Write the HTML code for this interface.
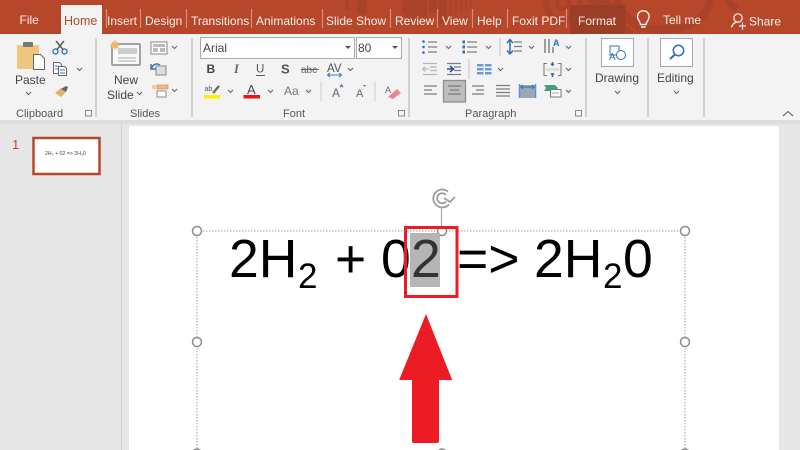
<!DOCTYPE html>
<html lang="en"><head><meta charset="utf-8"><title>PowerPoint</title>
<style>html,body{margin:0;padding:0;background:#e6e6e6;overflow:hidden}svg{display:block;filter:blur(.35px)}text{font-family:"Liberation Sans",Arial,sans-serif}.t{font-size:12px;fill:#fbefea}.r{font-size:12px;fill:#444}.g{font-size:11px;fill:#555}.dd{fill:none;stroke:#666;stroke-width:1.100}.ln{stroke:#7d7d7d;stroke-width:1.300;fill:none}</style></head><body>
<svg width="800" height="450" viewBox="0 0 800 450" xmlns="http://www.w3.org/2000/svg">
<rect width="800" height="450" fill="#e6e6e6"/>
<!-- title bar -->
<rect width="800" height="34" fill="#b7472a"/>
<g fill="#a8432a"><rect x="345" y="0" width="4" height="10"/><rect x="357" y="0" width="10" height="14"/><path d="M402 0h25v20l-10 3-15-10z"/><rect x="429" y="0" width="8" height="13"/><rect x="438" y="0" width="9" height="24"/><path d="M450 0h2v15h-2zM455 0h2v15h-2zM460 0h2v12h-2zM465 0h2v10h-2zM470 0h2v7h-2z"/></g>
<g fill="none" stroke="#a8432a"><circle cx="563" cy="3" r="17" stroke-width="6"/><circle cx="563" cy="3" r="6" stroke-width="4"/><path d="M588 -2L632 34M600 -2L642 30" stroke-width="7"/><path d="M618 -2a46 32 0 0 0 92 0" stroke-width="8"/><path d="M726 0L737 9" stroke-width="7"/></g>
<rect x="570" y="5" width="55" height="29" fill="#9a3e25"/>
<path d="M61 34V5h41v29z" fill="#f3f3f3"/>
<g stroke="#d98d76" stroke-width="1.200"><path d="M106.500 9V28M140.500 9V28M186.500 9V28M251.500 9V28M322.500 9V28M390.500 9V28M437.500 9V28M472.500 9V28M507.500 9V28M566.500 9V28"/></g>
<text x="19.500" y="24" class="t">File</text><text x="64" y="25" font-size="12.500" fill="#b7472a">Home</text>
<text x="107" y="25" class="t">Insert</text><text x="145" y="25" class="t">Design</text><text x="191" y="25" class="t">Transitions</text><text x="256" y="25" class="t">Animations</text><text x="326" y="25" class="t">Slide Show</text><text x="395" y="25" class="t">Review</text><text x="442" y="25" class="t">View</text><text x="477" y="25" class="t">Help</text><text x="512" y="25" class="t">Foxit PDF</text><text x="578" y="25" class="t">Format</text><text x="663" y="24" class="t">Tell me</text><text x="749" y="25.500" class="t">Share</text>
<!-- bulb -->
<path d="M640.500 24.500c0-3-3-4-3-8a5.800 5.800 0 0 1 11.600 0c0 4-3 5-3 8z" fill="none" stroke="#fbefea" stroke-width="1.400"/><path d="M641 27h4.500" stroke="#fbefea" stroke-width="1.500"/>
<!-- person -->
<circle cx="738" cy="18" r="4.200" fill="none" stroke="#fbefea" stroke-width="1.200"/><path d="M731.500 27.500c1-4 3.500-5.500 6.500-5.500M739 26h7M742.500 22.500v7" fill="none" stroke="#fbefea" stroke-width="1.200"/>
<!-- ribbon -->
<rect y="34" width="800" height="86" fill="#f3f3f3"/>
<rect y="120" width="800" height="4" fill="#dcdcdc"/>
<g stroke="#c4c4c4" stroke-width="1.500"><path d="M96 38V117M192 38V117M409 38V117M586 38V117M648 38V117M704 38V117"/></g>
<!-- Clipboard -->
<rect x="17" y="45" width="22" height="24" rx="1" fill="#eec67e"/><rect x="23" y="42" width="10" height="5" rx="1" fill="#777"/>
<path d="M33.500 54.500h7l4 4v11h-11z" fill="#fff" stroke="#666"/>
<text x="15" y="84" class="r">Paste</text><path d="M26 92l2.500 2.500L31 92" class="dd"/>
<g fill="none" stroke="#3d78b8" stroke-width="1.500"><circle cx="55.500" cy="51.500" r="2.500"/><circle cx="64.500" cy="51.500" r="2.500"/></g><path d="M56 41l7 8.500M64 41l-7 8.500" stroke="#555" stroke-width="1.400"/>
<path d="M53.500 62.500h6l2 2v9h-8z" fill="#fff" stroke="#667"/><path d="M55 66h4M55 69h4" stroke="#3d78b8"/><path d="M58.500 66.500h6l2 2v7h-8z" fill="#fff" stroke="#667"/><path d="M60 70h5M60 73h5" stroke="#3d78b8"/><path d="M77 68l2.500 2.500L82 68" class="dd"/>
<path d="M55 93l6-5 5 4-5 5z" fill="#e3b26a"/><path d="M61 89l5-3 2 1-2 5z" fill="#666"/>
<text x="16" y="117" class="g">Clipboard</text><path d="M85.500 110.500h6v5.500h-6z" fill="none" stroke="#888"/>
<!-- Slides -->
<rect x="112" y="44" width="28" height="21" rx="1" fill="#f8f8f8" stroke="#888" stroke-width="1.500"/><rect x="118" y="48" width="19" height="6" fill="#ccc"/><path d="M118 58h18M118 61h18" stroke="#aaa"/><circle cx="115" cy="45" r="3.500" fill="#f2c27a"/><path d="M110 45h10M115 40v10M112 42l6 6M118 42l-6 6" stroke="#eeb45f"/>
<text x="114" y="84" class="r">New</text><text x="107" y="99" class="r">Slide</text><path d="M137 92l2.500 2.500L142 92" class="dd"/>
<rect x="151" y="42" width="16" height="12" fill="#fff" stroke="#888"/><rect x="153" y="44" width="12" height="3" fill="#bbb"/><rect x="153" y="48" width="5" height="4" fill="#bbb"/><rect x="160" y="48" width="5" height="4" fill="#bbb"/><path d="M172 46l2.500 2.500L177 46" class="dd"/>
<rect x="156" y="66" width="10" height="9" fill="#ddd" stroke="#888"/><path d="M152 68a5 5 0 0 1 8-3M151 64v5h5" fill="none" stroke="#2f6fb5" stroke-width="1.400"/>
<rect x="157" y="85" width="11" height="4" fill="#f0b78a" stroke="#d9853f" stroke-width=".6"/><rect x="157" y="91" width="9" height="6" fill="#fff" stroke="#888"/><rect x="152" y="85" width="4" height="4" fill="#f2cd95"/><path d="M172 89l2.500 2.500L177 89" class="dd"/>
<text x="130" y="117" class="g">Slides</text>
<!-- Font -->
<rect x="200.500" y="37.500" width="154" height="21" fill="#fff" stroke="#aaa"/><rect x="356.500" y="37.500" width="45" height="21" fill="#fff" stroke="#aaa"/>
<text x="203" y="52" class="r">Arial</text><text x="358" y="52" class="r">80</text>
<path d="M345 46l3 3 3-3zM392 46l3 3 3-3z" fill="#555"/>
<text x="206.500" y="73" font-size="12" font-weight="700" fill="#444">B</text><text x="234" y="73" font-size="12.500" font-style="italic" font-weight="700" style="font-family:'Liberation Serif',serif" fill="#666">I</text><text x="256" y="72.500" font-size="11.500" fill="#555">U</text><path d="M256 75.500h9" stroke="#555"/>
<text x="281" y="73.500" font-size="13" font-weight="700" fill="#555">S</text><text x="301" y="73" font-size="10" fill="#666">abc</text><path d="M301 69.500h18" stroke="#666"/><text x="327" y="72" font-size="11.500" fill="#555">AV</text><path d="M328 75h13M330 73l-2.500 2 2.500 2M339 73l2.500 2-2.500 2" stroke="#3d78b8" stroke-width="1.100" fill="none"/><path d="M348 68l2.500 2.500L353 68" class="dd"/>
<text x="204.500" y="91" font-size="7" fill="#555">ab</text><path d="M213 93l6-7" stroke="#666" stroke-width="2.200"/><rect x="204" y="95" width="16" height="3.500" fill="#ffee00"/><path d="M228 90l2.500 2.500L233 90" class="dd"/>
<text x="247" y="94" font-size="13" fill="#444">A</text><rect x="243.500" y="95" width="16.500" height="3.500" fill="#e8141c"/><path d="M268 90l2.500 2.500L273 90" class="dd"/>
<text x="284" y="95" font-size="12" fill="#777">Aa</text><path d="M306 90l2.500 2.500L311 90" class="dd"/>
<path d="M321 81V101M375 81V101" stroke="#ccc"/>
<text x="332" y="97" font-size="12" fill="#666">A</text><path d="M340 87l1.500-2 1.500 2" fill="none" stroke="#3d78b8" stroke-width="1.300"/><text x="356" y="97" font-size="11" fill="#666">A</text><path d="M363 85h3l-1.500 2z" fill="#3d78b8"/>
<text x="385" y="93" font-size="9" fill="#666">A</text><path d="M388 97l9-8 4 4-8 6z" fill="#ec8395"/>
<text x="283" y="117" class="g">Font</text><path d="M398.500 110.500h6v5.500h-6z" fill="none" stroke="#888"/>
<!-- Paragraph row 1 -->
<path d="M428 42h9M428 47h9M428 52h9M467 42h10M467 47h10M467 52h10M514 42h8M514 46.500h8M514 51h8" class="ln"/>
<g fill="#2f6fb5"><circle cx="423.500" cy="41.500" r="1.300"/><circle cx="423.500" cy="47" r="1.300"/><circle cx="423.500" cy="52.500" r="1.300"/><rect x="462.500" y="40.500" width="2.500" height="3"/><rect x="462.500" y="45.500" width="2.500" height="3"/><rect x="462.500" y="50.500" width="2.500" height="3"/></g>
<path d="M446 46l2.500 2.500L451 46M486 46l2.500 2.500L491 46M529 46l2.500 2.500L534 46M566 46l2.500 2.500L571 46" class="dd"/>
<path d="M510 40v14M507 43l3-3.500 3 3.500M507 50.500l3 3.500 3-3.500" fill="none" stroke="#2f6fb5" stroke-width="1.500"/>
<path d="M500 38V56" stroke="#ccc" stroke-width="1.300"/>
<path d="M545 39v14M549 39v14M553 47v6" stroke="#666" stroke-width="1.200"/><text x="553" y="46" font-size="9" font-weight="700" fill="#2f6fb5">A</text>
<!-- row 2 -->
<path d="M423 63.500h14M430 67h7M430 70.500h7M423 74.500h14" stroke="#b5b5b5" stroke-width="1.200"/><path d="M423 69h6M425.500 66.500l-3 2.500 3 2.500" fill="none" stroke="#bbb" stroke-width="1.200"/>
<path d="M447 63.500h14M454 67h7M454 70.500h7M447 74.500h14" class="ln"/><path d="M447 69h6M450 66l3.500 3-3.500 3" fill="none" stroke="#1f5896" stroke-width="1.500"/>
<path d="M469 59V79" stroke="#ccc" stroke-width="1.300"/>
<g fill="#6a9bd4"><rect x="477" y="64" width="6.500" height="2.500"/><rect x="477" y="68" width="6.500" height="2.500"/><rect x="477" y="72" width="6.500" height="2.500"/><rect x="485" y="64" width="6.500" height="2.500"/><rect x="485" y="68" width="6.500" height="2.500"/><rect x="485" y="72" width="6.500" height="2.500"/></g><path d="M498 68l2.500 2.500L503 68" class="dd"/>
<path d="M547 63.500h-3v12h3M558 63.500h3v12h-3" fill="none" stroke="#777"/><path d="M546 68h13v3h-13z" fill="#ddd"/><path d="M552.500 62v4M551 65l1.500-2 1.500 2M552.500 73v4M551 73.500l1.500 2 1.500-2" fill="none" stroke="#2f6fb5" stroke-width="1.300"/><path d="M566 68l2.500 2.500L571 68" class="dd"/>
<!-- row 3 -->
<rect x="443.500" y="80.500" width="22" height="21.500" fill="#bdbdbd" stroke="#8e8e8e" stroke-width="1.300"/>
<path d="M424 86h13M424 90h8M424 94h13M448 86h13M450 90h9M448 94h13M472 86h12M476 90h8M472 94h12M496 85.500h14M496 89h14M496 92.500h14M496 96h14" class="ln"/>
<rect x="520" y="85" width="15" height="13" fill="#9aa7b5"/><path d="M519.500 84v14M535.500 84v14" stroke="#5b93d3" stroke-width="1.500"/><path d="M521 87h13M523 85l-2 2 2 2M532 85l2 2-2 2" fill="none" stroke="#2f6fb5"/>
<path d="M544 85h11l3 3-3 3h-11l2-3z" fill="#3f9e86"/><rect x="550.500" y="89.500" width="10.500" height="7.500" fill="#fff" stroke="#777"/><path d="M552 93h7" stroke="#aaa"/><path d="M566 90l2.500 2.500L571 90" class="dd"/>
<text x="465" y="117" class="g">Paragraph</text><path d="M575.500 110.500h6v5.500h-6z" fill="none" stroke="#888"/>
<!-- Drawing/Editing -->
<rect x="601.500" y="38.500" width="32" height="28" fill="#fff" stroke="#a8a8a8"/>
<rect x="610" y="46" width="9" height="9" fill="none" stroke="#2f6fb5"/><circle cx="621" cy="55" r="4.500" fill="#fff" stroke="#2f6fb5"/><text x="609" y="60" font-size="10" fill="#2f6fb5">A</text>
<text x="595" y="82" class="r">Drawing</text><path d="M615 91l2.500 2.500L620 91" class="dd"/>
<rect x="660.500" y="38.500" width="32" height="28" fill="#fff" stroke="#a8a8a8"/>
<circle cx="678.500" cy="50.500" r="5.200" fill="none" stroke="#2f6fb5" stroke-width="1.500"/><path d="M675 54.500l-5 4.500" stroke="#2f6fb5" stroke-width="2"/>
<text x="657" y="82" class="r">Editing</text><path d="M674 91l2.500 2.500L679 91" class="dd"/>
<path d="M783 116l5-4.500 5 4.500" fill="none" stroke="#555"/>
<!-- thumbnail pane -->
<path d="M121.500 124V450" stroke="#cfcfcf"/>
<text x="12" y="149" font-size="13" fill="#c5472a">1</text>
<rect x="33.500" y="138" width="66" height="36" fill="#fff" stroke="#b7472a" stroke-width="2.500"/>
<text x="45" y="155" font-size="5.200" fill="#444">2H₂ + 02 =&gt; 2H₂0</text>
<!-- slide -->
<rect x="129" y="126" width="650" height="324" fill="#fff"/>
<!-- frame -->
<path d="M197 231H685M197 231V450M685 231V450" fill="none" stroke="#9c9c9c" stroke-dasharray="1.500 1.500"/>
<path d="M441.500 207V231" stroke="#aaa" stroke-width="1.200"/>
<g fill="#fff" stroke="#8c8c8c" stroke-width="1.500"><circle cx="197" cy="231" r="4.500"/><circle cx="685" cy="231" r="4.500"/><circle cx="197" cy="342" r="4.500"/><circle cx="685" cy="342" r="4.500"/><circle cx="442" cy="231" r="4.500"/><circle cx="442" cy="453.500" r="4.500"/><circle cx="197" cy="453.500" r="4.500"/><circle cx="685" cy="453.500" r="4.500"/></g>
<g fill="none" stroke="#9a9a9a" stroke-width="1.700"><path d="M448 191.500a9 9 0 1 0 1 13"/><path d="M446 195a5 5 0 1 0 0 6.500"/><path d="M444 198l6 4 5-5"/></g>
<!-- highlight -->
<rect x="410" y="233" width="30" height="54" fill="#b5b5b5"/>
<!-- equation -->
<text y="277" font-size="53.500" fill="#000"><tspan x="229">2H</tspan><tspan x="298" y="288" font-size="35">2</tspan><tspan x="335" y="277">+</tspan><tspan x="381">0</tspan><tspan x="411" fill="#333">2</tspan><tspan x="457">=&gt;</tspan><tspan x="534">2H</tspan><tspan x="603" y="288" font-size="35">2</tspan><tspan x="623" y="277">0</tspan></text>
<rect x="405.500" y="227.500" width="51.500" height="69" fill="none" stroke="#ed1c24" stroke-width="3"/>
<!-- arrow -->
<path d="M426 314L452 379.500Q452 380 451 380H439V441Q439 443 437 443H414Q412 443 412 441V380H400Q399 380 399.500 379z" fill="#ed1c24"/>
</svg></body></html>
